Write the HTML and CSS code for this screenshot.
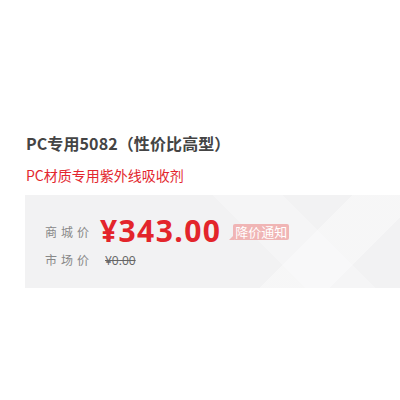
FILE: index.html
```html
<!DOCTYPE html>
<html>
<head>
<meta charset="utf-8">
<link rel="stylesheet" href="styles.css">
</head>
<body>
<div class="product">
  <h1 class="title">PC专用5082（性价比高型）</h1>
  <p class="subtitle">PC材质专用紫外线吸收剂</p>
  <div class="pricebox">
    <div class="row row-main">
      <span class="label">商城价</span>
      <span class="price">¥343.00</span>
      <span class="notice">降价通知</span>
    </div>
    <div class="row row-market">
      <span class="label">市场价</span>
      <span class="market">¥0.00</span>
    </div>
  </div>
</div>
</body>
</html>
```
FILE: styles.css
```css
html, body {
  margin: 0;
  padding: 0;
  background: #fff;
}
body {
  font-family: "Noto Sans CJK SC", "Open Sans", sans-serif;
  width: 400px;
  height: 400px;
  overflow: hidden;
}
.product {
  padding: 131px 0 0 25px;
}
.title {
  margin: 0;
  font-size: 16px;
  line-height: 24px;
  font-weight: bold;
  color: #444;
  padding-left: 1px;
  letter-spacing: 0.1px;
}
.subtitle {
  margin: 10px 0 0;
  font-size: 14px;
  line-height: 20px;
  color: #e3262e;
  padding-left: 1px;
}
.pricebox {
  margin-top: 10px;
  height: 93px;
  box-sizing: border-box;
  padding: 21px 0 0 20px;
  background:
    linear-gradient(135deg, transparent 0 70%, rgba(255,255,255,0.35) 70% 85%, transparent 85%),
    linear-gradient(45deg, transparent 0 60%, rgba(255,255,255,0.25) 60% 75%, transparent 75%),
    #f2f2f3;
}
.row {
  display: flex;
  align-items: center;
}
.label {
  font-size: 12px;
  color: #888;
  letter-spacing: 4px;
  width: 55px;
}
.price {
  font-family: "Open Sans", sans-serif;
  font-size: 30px;
  font-weight: bold;
  color: #e3252b;
  line-height: 30px;
  letter-spacing: 1.4px;
}
.notice {
  position: relative;
  margin-left: 12px;
  margin-top: 2px;
  background: #f0b5b5;
  color: #fff;
  font-size: 13px;
  line-height: 16px;
  padding: 0 2px;
  border-radius: 2px;
}
.notice::before {
  content: "";
  position: absolute;
  left: -4px;
  bottom: 0;
  border-style: solid;
  border-width: 0 0 5px 5px;
  border-color: transparent transparent #f0b5b5 transparent;
}
.row-market .label {
  line-height: 28px;
  width: 60px;
}
.market {
  font-family: "Open Sans", sans-serif;
  font-size: 12px;
  color: #666;
  text-decoration: line-through;
}
```
